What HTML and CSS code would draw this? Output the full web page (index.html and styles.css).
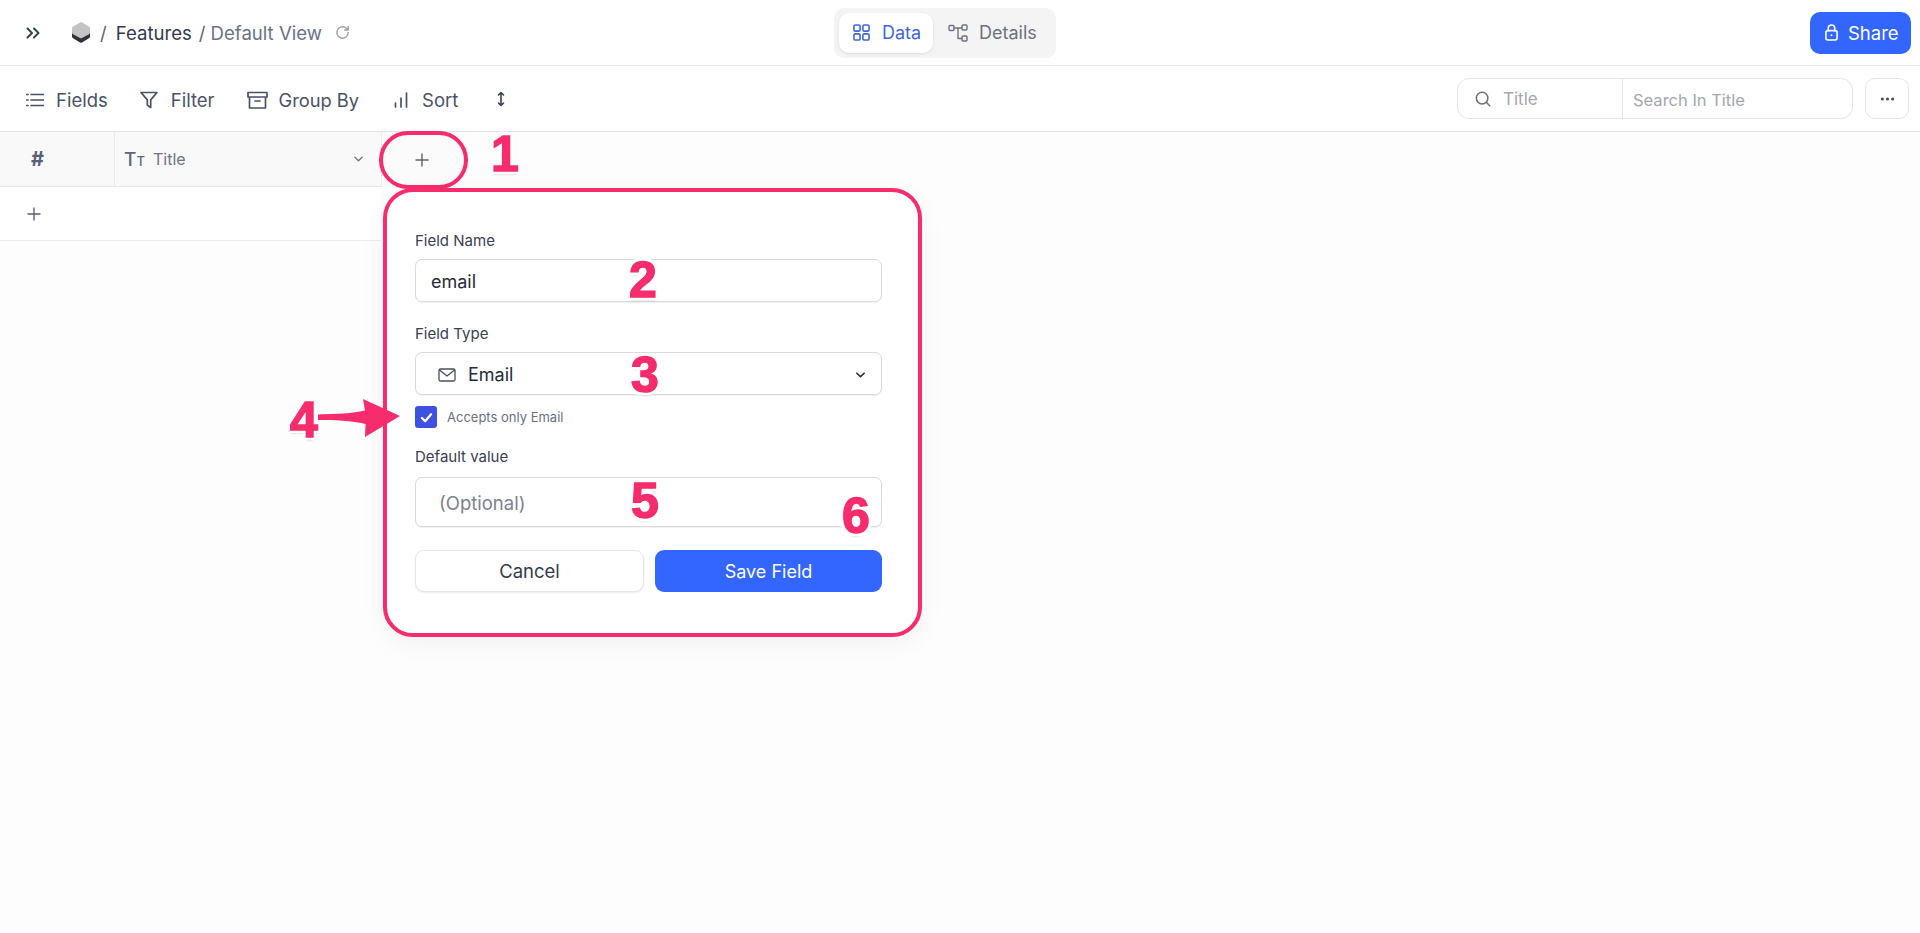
FILE: index.html
```html
<!DOCTYPE html>
<html lang="en">
<head>
<meta charset="utf-8">
<title>Features - Default View</title>
<link rel="stylesheet" href="styles.css">
</head>
<body>
<header class="topbar">
  <div class="crumbs">
    <svg class="ic-chev" viewBox="0 0 14 12"><path d="M1.500 1.500 6 6l-4.500 4.500M8 1.500 12.500 6 8 10.500"/></svg>
    <svg class="ic-logo" viewBox="0 0 18 21"><path class="l-dark" d="M0 9v5.500c0 .8.400 1.400 1 1.800L8 20.500c.6.400 1.400.400 2 0l7-4.200c.6-.4 1-1 1-1.800V9z"/><path class="l-light" d="M8 .5c.6-.4 1.400-.4 2 0l7 4c.6.400 1 1 1 1.800v4.200c0 .8-.4 1.400-1 1.800l-7 3.700c-.6.400-1.400.400-2 0l-7-3.700c-.6-.4-1-1-1-1.800V6.300c0-.8.400-1.400 1-1.800z"/></svg>
    <span class="sep">/</span>
    <span class="crumb-main">Features</span>
    <span class="sep sep-b">/</span>
    <span class="crumb-view">Default View</span>
    <svg class="ic-refresh" viewBox="0 0 24 24"><path d="M20 12a8 8 0 1 1-2.600-5.900L20 8.500M20 3.500v5h-5"/></svg>
  </div>
  <nav class="tabs">
    <div class="tab tab-on">
      <svg class="ic-tab" viewBox="0 0 18 18"><rect x="1" y="1" width="6.500" height="6.500" rx="1.500"/><rect x="10.500" y="1" width="6.500" height="6.500" rx="1.500"/><rect x="1" y="10.500" width="6.500" height="6.500" rx="1.500"/><rect x="10.500" y="10.500" width="6.500" height="6.500" rx="1.500"/></svg>
      <span>Data</span>
    </div>
    <div class="tab">
      <svg class="ic-tab ic-details" viewBox="0 0 20 18"><rect x="1" y="1.500" width="5" height="5" rx="1"/><rect x="14" y="1" width="5" height="5" rx="1"/><rect x="14" y="12" width="5" height="5" rx="1"/><path d="M6 4h8M10 4v10.500h4"/></svg>
      <span>Details</span>
    </div>
  </nav>
  <button class="share">
    <svg class="ic-lock" viewBox="0 0 14 18"><rect x="1" y="7" width="12" height="10" rx="2"/><path d="M3.500 7V4.500a3.500 3.500 0 0 1 7 0V7"/><circle class="dot" cx="7" cy="12" r="1.100"/></svg>
    <span>Share</span>
  </button>
</header>

<section class="toolbar">
  <div class="tool tool-fields">
    <svg class="ic-tool" viewBox="0 0 18 14"><path d="M5 1.500h13M5 7h13M5 12.500h13M.5 1.500h1.500M.5 7h1.500M.5 12.500h1.500"/></svg>
    <span>Fields</span>
  </div>
  <div class="tool tool-filter">
    <svg class="ic-tool" viewBox="0 0 18 18"><path d="M1 1.500h16l-6.300 7.400v7.600l-3.400-2.400V8.900z"/></svg>
    <span>Filter</span>
  </div>
  <div class="tool tool-group">
    <svg class="ic-tool ic-group" viewBox="0 0 21 18"><path d="M1 1.500h19v4.500H1zM2.500 6v11h16V6M8 10h5"/></svg>
    <span>Group By</span>
  </div>
  <div class="tool tool-sort">
    <svg class="ic-tool ic-sort" viewBox="0 0 14 16"><path d="M1.500 15v-4M7 15V6M12.500 15V1"/></svg>
    <span>Sort</span>
  </div>
  <svg class="ic-updown" viewBox="0 0 8 16"><path d="M4 1.500v13M1.500 4 4 1.500 6.500 4M1.500 12 4 14.500 6.500 12"/></svg>
  <div class="search">
    <div class="search-field">
      <svg class="ic-search" viewBox="0 0 18 18"><circle cx="8" cy="8" r="6.500"/><path d="m13 13 3.500 3.500"/></svg>
      <span>Title</span>
    </div>
    <div class="search-input">Search In Title</div>
  </div>
  <button class="more"><svg class="ic-more" viewBox="0 0 16 4"><circle cx="2.500" cy="2" r="1.700"/><circle cx="8" cy="2" r="1.700"/><circle cx="13.500" cy="2" r="1.700"/></svg></button>
</section>

<main class="canvas">
  <div class="thead">
    <div class="th th-num">#</div>
    <div class="th th-title">
      <span class="tt">T<small>T</small></span>
      <span class="th-label">Title</span>
      <svg class="ic-down" viewBox="0 0 10 6"><path d="m1 1 4 4 4-4"/></svg>
    </div>
    <div class="th th-add"><svg class="ic-plus" viewBox="0 0 14 14"><path d="M7 1v12M1 7h12"/></svg></div>
  </div>
  <div class="trow"><svg class="ic-plus" viewBox="0 0 14 14"><path d="M7 1v12M1 7h12"/></svg></div>

  <div class="oval"></div>

  <form class="popup">
    <label class="lbl">Field Name</label>
    <div class="input input-name">email</div>
    <label class="lbl lbl-type">Field Type</label>
    <div class="input input-type">
      <svg class="ic-mail" viewBox="0 0 18 14"><rect x="1" y="1" width="16" height="12" rx="1.500"/><path d="m1.500 2 7.500 6 7.500-6"/></svg>
      <span>Email</span>
      <svg class="ic-down ic-down-dark" viewBox="0 0 10 6"><path d="m1 1 4 4 4-4"/></svg>
    </div>
    <div class="check-row">
      <span class="check"><svg viewBox="0 0 14 12"><path d="m2 6.500 3.500 3.500L12 2.500"/></svg></span>
      <span>Accepts only Email</span>
    </div>
    <label class="lbl lbl-default">Default value</label>
    <div class="input input-default">(Optional)</div>
    <div class="actions">
      <button type="button" class="btn btn-cancel">Cancel</button>
      <button type="button" class="btn btn-save">Save Field</button>
    </div>
  </form>

  <svg class="arrow" viewBox="0 0 84 40"><path d="M0 15.500C18 15 35 14.500 47 11.500L45 0 82 17 47 38 47.500 25C34 21.500 16 21 0 21z"/></svg>
  <span class="num n1">1</span>
  <span class="num n2">2</span>
  <span class="num n3">3</span>
  <span class="num n4">4</span>
  <span class="num n5">5</span>
  <span class="num n6">6</span>
</main>
</body>
</html>
```

FILE: styles.css
```css
* { box-sizing: border-box; }
html, body { margin: 0; height: 100%; }
body {
  font-family: Inter, "Noto Sans", sans-serif;
  color: #4a5268;
  background: #fdfdfd;
  overflow: hidden;
}
svg { display: block; fill: none; stroke: currentColor; stroke-linecap: round; stroke-linejoin: round; }
button { font-family: inherit; }

/* top bar */
.topbar {
  height: 66px;
  background: #fff;
  border-bottom: 1px solid #e7e7e9;
  display: flex;
  align-items: center;
  padding-right: 9px;
}
.crumbs { width: 834px; display: flex; align-items: center; padding-left: 26px; font-size: 18.600px; }
.ic-chev { width: 14px; height: 12px; stroke-width: 2; color: #374151; }
.ic-logo { width: 18px; height: 21px; margin-left: 32px; stroke: none; }
.l-dark { fill: #2f3238; stroke: none; }
.l-light { fill: #c4c4c6; stroke: none; }
.sep { margin-left: 10px; color: #5f6678; }
.crumb-main { margin-left: 9px; color: #333a4d; }
.sep-b { margin-left: 7px; }
.crumb-view { margin-left: 5px; color: #6b7285; }
.ic-refresh { width: 17px; height: 17px; margin-left: 12px; stroke-width: 2; color: #9a9fa8; }

.tabs {
  width: 222px;
  height: 50px;
  padding: 5px;
  display: flex;
  gap: 0;
  background: #f4f4f5;
  border-radius: 10px;
}
.tab { display: flex; align-items: center; gap: 11px; font-size: 18px; color: #6e727c; padding-left: 15px; }
.tab-on {
  width: 94px;
  padding-left: 14px;
  gap: 12px;
  background: #fff;
  color: #3f67dc;
  border-radius: 10px;
  box-shadow: 0 1px 3px rgba(0, 0, 0, .1);
}
.ic-tab { width: 17px; height: 17px; stroke-width: 1.700; }
.ic-details { width: 20px; height: 18px; stroke-width: 1.400; }

.share {
  margin-left: auto;
  width: 101px;
  height: 42px;
  border: 0;
  border-radius: 10px;
  background: #3366ff;
  color: #fff;
  font-size: 18.500px;
  display: flex;
  align-items: center;
  padding-left: 15px;
  gap: 10px;
}
.ic-lock { width: 13px; height: 17px; stroke-width: 1.700; }
.dot { fill: currentColor; stroke: none; }

/* toolbar */
.toolbar {
  height: 66px;
  background: #fff;
  border-bottom: 1px solid #e3e3e6;
  display: flex;
  align-items: center;
  padding-left: 26px;
  padding-right: 11px;
  font-size: 18.500px;
  color: #4a5268;
}
.tool { display: flex; align-items: center; gap: 12px; margin-top: 2px; }
.tool-filter { margin-left: 32px; gap: 13px; }
.tool-group { margin-left: 32px; gap: 11px; }
.tool-group span { font-size: 18.300px; }
.tool-sort { margin-left: 35px; gap: 14px; }
.ic-tool { width: 18px; height: 18px; stroke-width: 1.700; }
.ic-group { width: 21px; }
.ic-sort { width: 14px; height: 16px; }
.ic-updown { width: 8px; height: 16px; margin-left: 39px; stroke-width: 1.600; color: #374151; }
.search {
  margin-left: auto;
  width: 396px;
  height: 41px;
  display: flex;
  border: 1px solid #e5e5e8;
  border-radius: 12px;
  background: #fff;
  font-size: 16.500px;
  color: #a3a7b0;
}
.search-field { width: 165px; display: flex; align-items: center; gap: 12px; padding-left: 17px; border-right: 1px solid #e5e5e8; font-size: 17px; }
.search-input { display: flex; align-items: center; padding-left: 10px; padding-top: 2px; }
.ic-search { width: 16px; height: 16px; stroke-width: 1.700; color: #6b7078; }
.more {
  margin-left: 12px;
  width: 44px;
  height: 41px;
  padding: 0;
  border: 1px solid #e5e5e8;
  border-radius: 10px;
  background: #fff;
  display: flex;
  align-items: center;
  justify-content: center;
}
.ic-more { width: 15px; height: 4px; fill: #4a5060; stroke: none; }

/* table */
.canvas { position: relative; height: 801px; }
.thead { width: 462px; height: 55px; display: flex; background: #f9f9fa; }
.th { display: flex; align-items: center; border-bottom: 1px solid #e8e8ea; }
.th-num { width: 115px; padding-left: 31px; border-right: 1px solid #e8e8ea; font-size: 20px; font-weight: 700; color: #5a6072; }
.th-title { width: 267px; padding-left: 9px; border-right: 1px solid #ececee; font-size: 16px; color: #6e7485; }
.tt { width: 29px; font-size: 19px; font-weight: 500; color: #5f6678; }
.tt small { font-size: 13px; }
.th-label { flex: 1; }
.ic-down { width: 9px; height: 6px; margin-right: 18px; stroke-width: 1.400; color: #6b7280; }
.th-add { flex: 1; padding-left: 33px; border-bottom: 0; background: #fbfbfb; }
.ic-plus { width: 14px; height: 14px; stroke-width: 1.400; color: #5c6273; }
.trow { width: 381px; height: 54px; display: flex; align-items: center; padding-left: 27px; background: #fff; border-bottom: 1px solid #ececee; }

/* annotations and popup */
.oval {
  position: absolute;
  left: 379px;
  top: -1px;
  width: 89px;
  height: 58px;
  border: 4px solid #f72c6c;
  border-radius: 29px;
}
.popup {
  position: absolute;
  left: 383px;
  top: 56px;
  width: 539px;
  height: 449px;
  padding: 39px 36px 0 28px;
  background: #fff;
  border: 4px solid #f72c6c;
  border-radius: 30px;
  box-shadow: 0 6px 24px rgba(0, 0, 0, .05);
  display: flex;
  flex-direction: column;
}
.lbl { height: 19px; font-size: 15px; line-height: 19px; color: #3a4052; }
.input {
  width: 467px;
  border: 1px solid #d9dade;
  border-radius: 7px;
  box-shadow: 0 1px 1px rgba(0, 0, 0, .06);
  background: #fff;
  display: flex;
  align-items: center;
  padding-top: 2px;
  font-size: 18px;
  color: #262b38;
}
.input-name { height: 43px; margin-top: 9px; padding-left: 15px; }
.lbl-type { margin-top: 22px; }
.input-type { height: 43px; margin-top: 9px; padding-left: 22px; gap: 12px; }
.input-type span { flex: 1; }
.ic-mail { width: 18px; height: 14px; stroke-width: 1.300; color: #4a4f5c; }
.ic-down-dark { margin-right: 16px; color: #262b38; stroke-width: 1.800; }
.check-row { margin-top: 11px; height: 22px; display: flex; align-items: center; gap: 10px; font-size: 13px; color: #6a7082; }
.check { width: 22px; height: 22px; border-radius: 3px; background: #3f51e0; display: flex; align-items: center; justify-content: center; }
.check svg { width: 13px; height: 11px; color: #fff; stroke-width: 2.500; }
.lbl-default { margin-top: 19px; }
.input-default { height: 50px; margin-top: 11px; padding-left: 23px; font-size: 18.500px; color: #7b8190; }
.actions { display: flex; gap: 11px; margin-top: 23px; width: 467px; }
.btn { height: 42px; flex: 1; border-radius: 9px; font-size: 18px; padding: 0; }
.btn-cancel { border: 1px solid #e6e6e9; background: #fff; color: #333a4d; font-size: 18.500px; box-shadow: 0 1px 2px rgba(0, 0, 0, .08); }
.btn-save { border: 0; background: #3366ff; color: #fff; }

.arrow { position: absolute; left: 318px; top: 267px; width: 84px; height: 40px; stroke: none; fill: #f72c6c; }
.num {
  position: absolute;
  font-family: "Liberation Sans", Arial, sans-serif;
  font-weight: 700;
  font-size: 50px;
  line-height: 50px;
  color: #f72c6c;
  -webkit-text-stroke: 1.500px #f72c6c;
  text-shadow: 3px 0 #fff, -3px 0 #fff, 0 3px #fff, 0 -3px #fff, 3px 3px #fff, -3px 3px #fff, 3px -3px #fff, -3px -3px #fff, 0 4px 2px rgba(0, 0, 0, .1);
}
.n1 { left: 491px; top: -3px; }
.n2 { left: 629px; top: 123px; }
.n3 { left: 631px; top: 218px; }
.n4 { left: 290px; top: 263px; }
.n5 { left: 631px; top: 344px; }
.n6 { left: 842px; top: 359px; }
```
